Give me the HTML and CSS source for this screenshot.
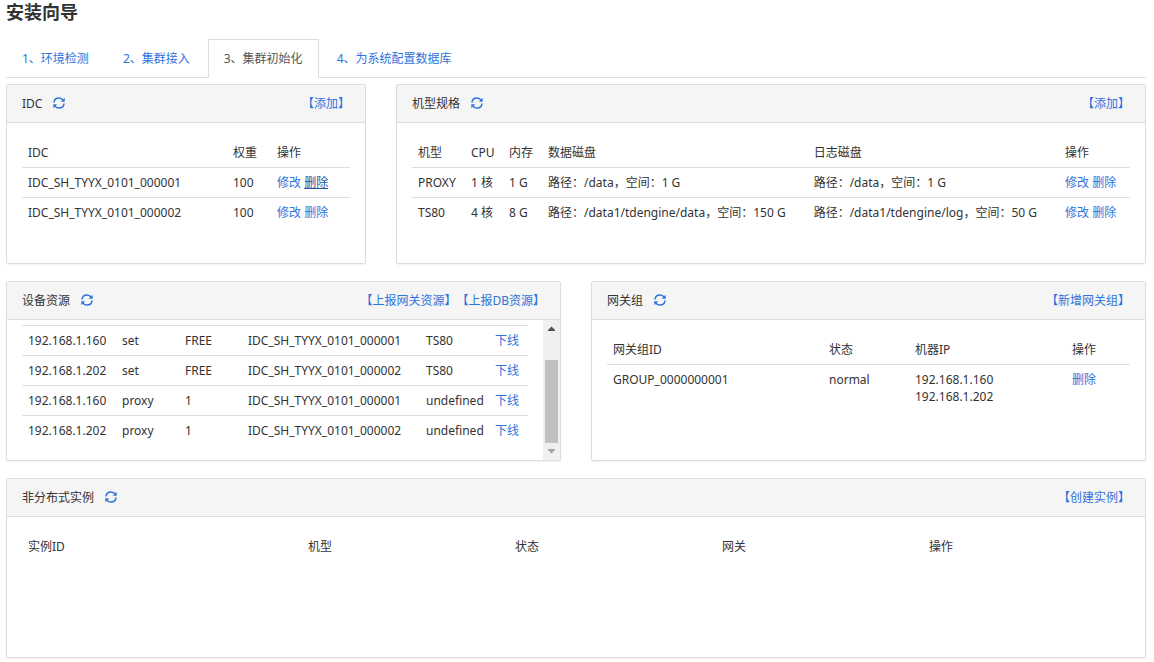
FILE: index.html
```html
<!DOCTYPE html>
<html lang="zh-CN">
<head>
<meta charset="utf-8">
<meta name="viewport" content="width=device-width, initial-scale=1">
<title>安装向导</title>
<link rel="stylesheet" href="styles.css">
</head>
<body>
<svg class="sprite" aria-hidden="true">
  <symbol id="refresh" viewBox="0 0 12 12">
    <path d="M1 5.500C1.200 2.500 3.200 1 6 1c1.800 0 3.200.7 4.200 2.200M11 6.500C10.800 9.500 8.800 11 6 11c-1.800 0-3.200-.7-4.200-2.200" fill="none" stroke="currentColor" stroke-width="1.500"/>
    <path d="M11.700.8v3.900H7.800zM.3 11.200V7.300h3.900z" fill="currentColor"/>
  </symbol>
</svg>
<h1 class="title">安装向导</h1>
<nav class="tabs">
  <a class="tab" href="#env">1、环境检测</a>
  <a class="tab" href="#access">2、集群接入</a>
  <a class="tab tab-active" href="#init" aria-current="page">3、集群初始化</a>
  <a class="tab" href="#db">4、为系统配置数据库</a>
</nav>
<main class="panels">
  <section class="panel span-4">
    <header class="panel-head">
      <h2 class="panel-title">IDC</h2>
      <button class="refresh" type="button" aria-label="刷新"><svg class="icon"><use href="#refresh"/></svg></button>
      <div class="actions"><a href="#add-idc">【添加】</a></div>
    </header>
    <div class="panel-body">
      <table class="table">
        <colgroup><col><col class="w-44"><col class="w-79"></colgroup>
        <thead><tr><th>IDC</th><th>权重</th><th>操作</th></tr></thead>
        <tbody>
          <tr><td>IDC_SH_TYYX_0101_000001</td><td>100</td><td><a href="#edit">修改</a> <a class="hovered" href="#delete">删除</a></td></tr>
          <tr><td>IDC_SH_TYYX_0101_000002</td><td>100</td><td><a href="#edit">修改</a> <a href="#delete">删除</a></td></tr>
        </tbody>
      </table>
    </div>
  </section>

  <section class="panel span-8">
    <header class="panel-head">
      <h2 class="panel-title">机型规格</h2>
      <button class="refresh" type="button" aria-label="刷新"><svg class="icon"><use href="#refresh"/></svg></button>
      <div class="actions"><a href="#add-spec">【添加】</a></div>
    </header>
    <div class="panel-body">
      <table class="table">
        <colgroup><col class="w-53"><col class="w-38"><col class="w-39"><col class="disk"><col><col class="w-71"></colgroup>
        <thead><tr><th>机型</th><th>CPU</th><th>内存</th><th>数据磁盘</th><th>日志磁盘</th><th>操作</th></tr></thead>
        <tbody>
          <tr><td>PROXY</td><td>1 核</td><td>1 G</td><td>路径：/data，空间：1 G</td><td>路径：/data，空间：1 G</td><td><a href="#edit">修改</a> <a href="#delete">删除</a></td></tr>
          <tr><td>TS80</td><td>4 核</td><td>8 G</td><td>路径：/data1/tdengine/data，空间：150 G</td><td>路径：/data1/tdengine/log，空间：50 G</td><td><a href="#edit">修改</a> <a href="#delete">删除</a></td></tr>
        </tbody>
      </table>
    </div>
  </section>

  <section class="panel span-6">
    <header class="panel-head">
      <h2 class="panel-title">设备资源</h2>
      <button class="refresh" type="button" aria-label="刷新"><svg class="icon"><use href="#refresh"/></svg></button>
      <div class="actions"><a href="#report-gateway">【上报网关资源】</a><a href="#report-db">【上报DB资源】</a></div>
    </header>
    <div class="scroll-area">
      <div class="panel-body scrolled-end">
        <table class="table">
          <colgroup><col class="w-94"><col class="w-63"><col class="w-63"><col><col class="w-69"><col class="w-39"></colgroup>
          <tbody>
            <tr><td>192.168.1.160</td><td>set</td><td>FREE</td><td>IDC_SH_TYYX_0101_000001</td><td>TS80</td><td><a href="#offline">下线</a></td></tr>
            <tr><td>192.168.1.202</td><td>set</td><td>FREE</td><td>IDC_SH_TYYX_0101_000002</td><td>TS80</td><td><a href="#offline">下线</a></td></tr>
            <tr><td>192.168.1.160</td><td>proxy</td><td>1</td><td>IDC_SH_TYYX_0101_000001</td><td>undefined</td><td><a href="#offline">下线</a></td></tr>
            <tr><td>192.168.1.202</td><td>proxy</td><td>1</td><td>IDC_SH_TYYX_0101_000002</td><td>undefined</td><td><a href="#offline">下线</a></td></tr>
          </tbody>
        </table>
      </div>
      <div class="scrollbar" aria-hidden="true">
        <svg class="arrow arrow-up" viewBox="0 0 17 17"><path d="M5 11h7v-1L8.500 6.500 5 10z"/></svg>
        <div class="track"><div class="thumb"></div></div>
        <svg class="arrow arrow-down" viewBox="0 0 17 17"><path d="M5 6h7v1L8.500 10.500 5 7z"/></svg>
      </div>
    </div>
  </section>

  <section class="panel span-6">
    <header class="panel-head">
      <h2 class="panel-title">网关组</h2>
      <button class="refresh" type="button" aria-label="刷新"><svg class="icon"><use href="#refresh"/></svg></button>
      <div class="actions"><a href="#add-group">【新增网关组】</a></div>
    </header>
    <div class="panel-body">
      <table class="table">
        <colgroup><col><col class="w-86"><col class="w-157"><col class="w-64"></colgroup>
        <thead><tr><th>网关组ID</th><th>状态</th><th>机器IP</th><th>操作</th></tr></thead>
        <tbody>
          <tr><td>GROUP_0000000001</td><td>normal</td><td>192.168.1.160<br>192.168.1.202</td><td><a href="#delete">删除</a></td></tr>
        </tbody>
      </table>
    </div>
  </section>

  <section class="panel span-12">
    <header class="panel-head">
      <h2 class="panel-title">非分布式实例</h2>
      <button class="refresh" type="button" aria-label="刷新"><svg class="icon"><use href="#refresh"/></svg></button>
      <div class="actions"><a href="#create">【创建实例】</a></div>
    </header>
    <div class="panel-body">
      <table class="table">
        <colgroup><col><col class="w-207"><col class="w-207"><col class="w-207"><col class="w-207"></colgroup>
        <thead><tr><th>实例ID</th><th>机型</th><th>状态</th><th>网关</th><th>操作</th></tr></thead>
      </table>
    </div>
  </section>
</main>
</body>
</html>
```
FILE: styles.css
```css
* { box-sizing: border-box; }
body {
  margin: 0;
  padding: 0 8px 4px 6px;
  background: #fff;
  color: #333;
  font: 12px/17px "Noto Sans", "Noto Sans CJK SC", sans-serif;
}
a { color: #2f73dc; text-decoration: none; }
a:hover, .hovered { color: #23559c; text-decoration: underline; }
.sprite { position: absolute; width: 0; height: 0; }

.title {
  margin: 0 0 15px;
  font-size: 18px;
  line-height: 24px;
  font-weight: 700;
}

.tabs {
  display: flex;
  gap: 2px;
  border-bottom: 1px solid #ddd;
}
.tab {
  padding: 10px 15px;
  border: 1px solid transparent;
  border-bottom: 0;
}
.tab-active {
  margin-bottom: -1px;
  background: #fff;
  border-color: #ddd;
  color: #555;
}

.panels {
  display: grid;
  grid-template-columns: repeat(12, minmax(0, 1fr));
  gap: 17px 30px;
  padding-top: 6px;
}
.span-4 { grid-column: span 4; }
.span-6 { grid-column: span 6; }
.span-8 { grid-column: span 8; }
.span-12 { grid-column: span 12; }

.panel {
  display: flex;
  flex-direction: column;
  min-height: 180px;
  border: 1px solid #ddd;
  border-radius: 2px;
  box-shadow: 0 1px 2px rgba(0, 0, 0, .06);
}
.panel-head {
  display: flex;
  align-items: center;
  padding: 10px 15px;
  background: #f5f5f5;
  border-bottom: 1px solid #ddd;
}
.panel-title { margin: 0; font-size: 12px; font-weight: 400; }
.refresh {
  display: flex;
  margin-left: 11px;
  padding: 0 0 1px;
  border: 0;
  background: none;
  color: #2f73dc;
}
.icon { width: 12px; height: 12px; }
.actions { display: flex; margin-left: auto; }
.panel-body { flex: 1; padding: 15px; }

.table {
  width: 100%;
  table-layout: fixed;
  border-collapse: separate;
  border-spacing: 0;
}
.table th, .table td {
  padding: 6px 0 6px 6px;
  text-align: left;
  vertical-align: top;
  font-weight: 400;
  white-space: nowrap;
}
.table td { border-top: 1px solid #ddd; }
.w-38 { width: 38px; }
.w-39 { width: 39px; }
.w-44 { width: 44px; }
.w-53 { width: 53px; }
.w-63 { width: 63px; }
.w-64 { width: 64px; }
.w-69 { width: 69px; }
.w-71 { width: 71px; }
.w-79 { width: 79px; }
.w-86 { width: 86px; }
.w-94 { width: 94px; }
.w-157 { width: 157px; }
.w-207 { width: 207px; }
.disk { width: 37%; }

.scroll-area { display: flex; flex: 1; }
.scrolled-end { padding-top: 5px; }
.scrollbar {
  display: flex;
  flex-direction: column;
  width: 17px;
  background: #f0f0f0;
}
.arrow { width: 17px; height: 17px; }
.arrow-up { fill: #505050; }
.arrow-down { fill: #a3a3a3; }
.track {
  display: flex;
  flex: 1;
  flex-direction: column;
  justify-content: flex-end;
  padding: 0 2px;
}
.thumb { height: 78%; background: #c1c1c1; }
```
